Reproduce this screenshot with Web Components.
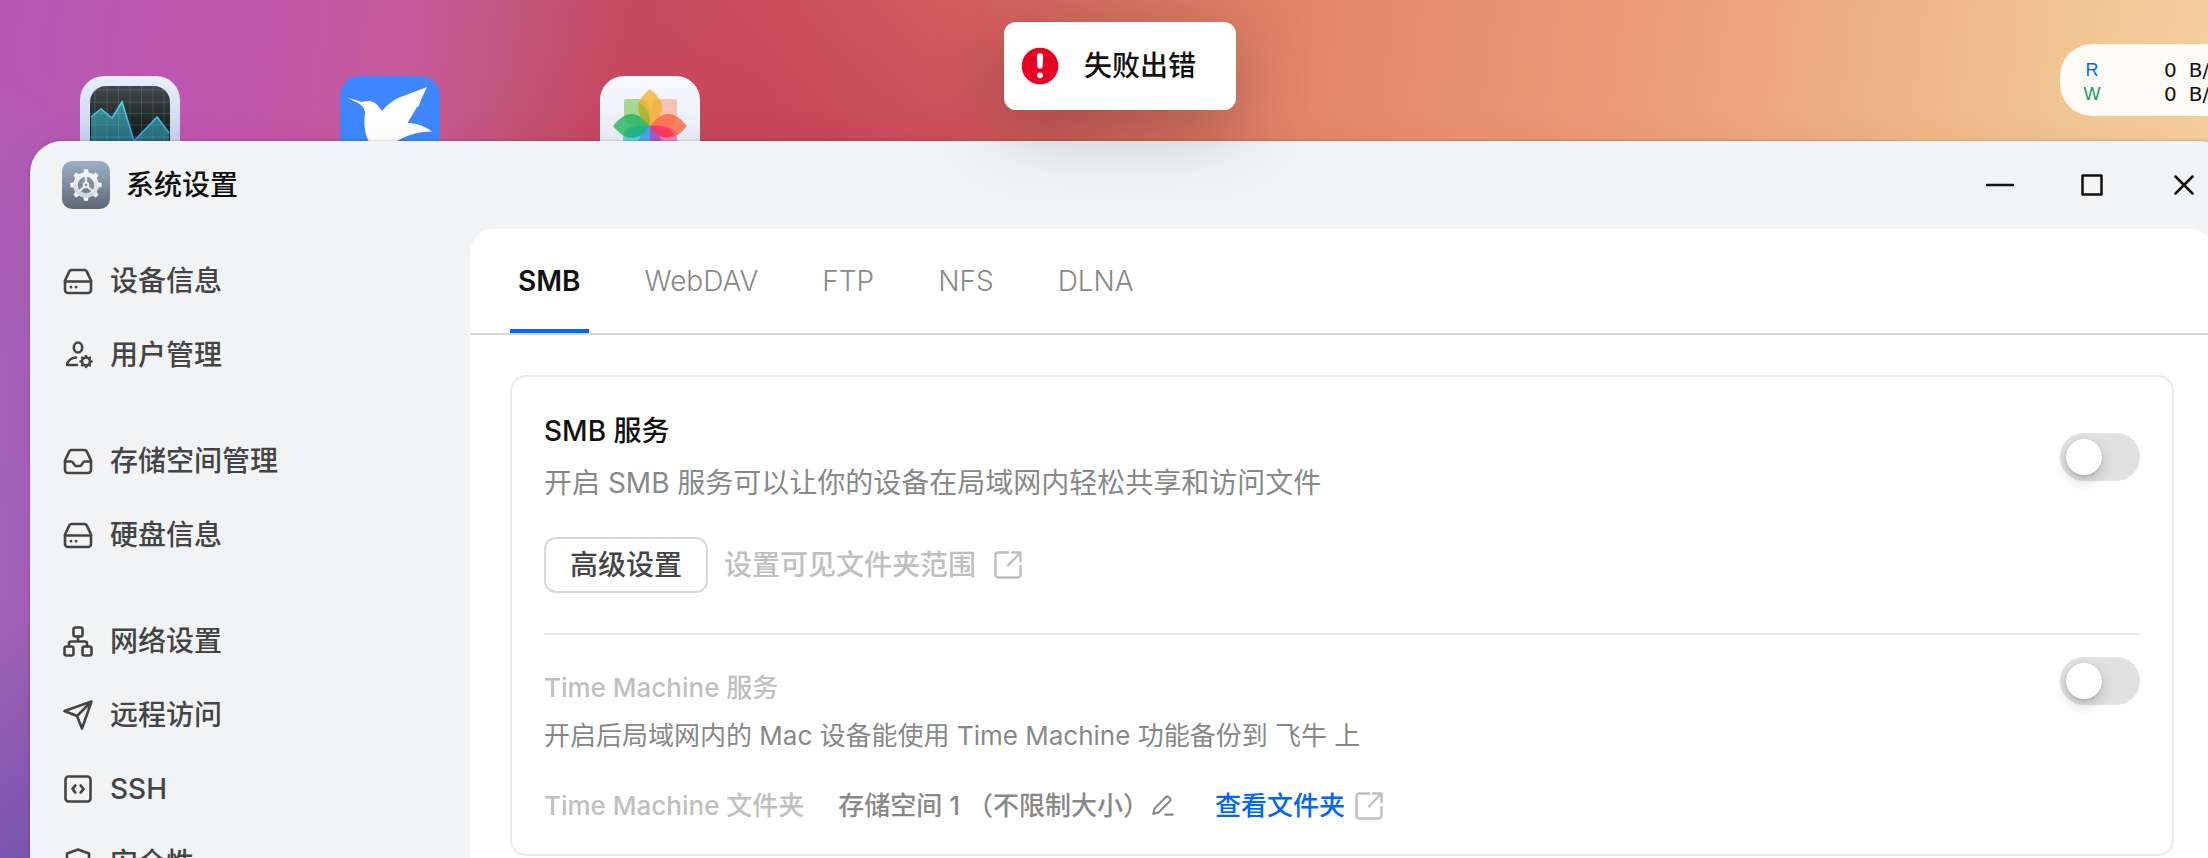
<!DOCTYPE html>
<html lang="zh-CN">
<head>
<meta charset="utf-8">
<meta name="viewport" content="width=device-width, initial-scale=1">
<title>系统设置</title>
<style>
    html, body {
        margin: 0;
        height: 100%;
        overflow: hidden;
    }

    body {
        --text-1: #111;
        --text-2: #444;
        --text-3: #888;
        --text-4: #bfbfbf;
        --line: #ebebeb;
        --primary: #0066ff;
        font-family: Inter, "Noto Sans CJK SC", sans-serif;
        font-size: 28px;
        line-height: 44px;
        color: var(--text-1);
    }
</style>
</head>
<body>
<nas-desktop>
    <app-icon slot="apps" name="monitor" label="资源监控"></app-icon>
    <app-icon slot="apps" name="bird" label="迅雷"></app-icon>
    <app-icon slot="apps" name="photos" label="相册"></app-icon>

    <disk-widget slot="widget"></disk-widget>

    <settings-window slot="window" heading="系统设置">
        <side-group slot="nav">
            <side-item icon="disk">设备信息</side-item>
            <side-item icon="user">用户管理</side-item>
        </side-group>
        <side-group slot="nav">
            <side-item icon="storage">存储空间管理</side-item>
            <side-item icon="disk">硬盘信息</side-item>
        </side-group>
        <side-group slot="nav">
            <side-item icon="network">网络设置</side-item>
            <side-item icon="send">远程访问</side-item>
            <side-item icon="code">SSH</side-item>
            <side-item icon="shield">安全性</side-item>
        </side-group>

        <tab-bar tabs="SMB,WebDAV,FTP,NFS,DLNA" active="SMB"></tab-bar>
        <settings-card>
            <service-row label="SMB 服务" desc="开启 SMB 服务可以让你的设备在局域网内轻松共享和访问文件">
                <smb-actions></smb-actions>
            </service-row>
            <service-row label="Time Machine 服务" desc="开启后局域网内的 Mac 设备能使用 Time Machine 功能备份到 飞牛 上" muted>
                <backup-folder></backup-folder>
            </service-row>
        </settings-card>
    </settings-window>

    <toast-message slot="toast">失败出错</toast-message>
</nas-desktop>

<script>
// Iconos de linea, todos en una caja de 32x32
const ICONS = {
    disk: `<path d="M9.5 5h13c1 0 1.7.5 2.2 1.4l4.3 9.1V25a3 3 0 0 1-3 3H6a3 3 0 0 1-3-3v-9.5l4.3-9.1C7.8 5.5 8.5 5 9.5 5z"/><path d="M3 16.5h26"/><path d="M9 22.2h.01M14 22.2h.01" stroke-width="2.8"/>`,
    user: `<ellipse cx="16" cy="8.5" rx="4.2" ry="5"/><path d="M14 18.5c-5 .4-8.5 3.5-9 7.500h10"/><circle cx="24" cy="22.5" r="4"/><path d="M24 17v1.5M24 26.5V28M18.5 22.5H20M28 22.5h1.5M20.1 18.600l1.1 1.1M26.800 25.300l1.1 1.1M20.1 26.400l1.1-1.1M26.800 19.700l1.1-1.1"/>`,
    storage: `<path d="M9.5 5h13c1 0 1.7.5 2.2 1.4l4.3 9.1V25a3 3 0 0 1-3 3H6a3 3 0 0 1-3-3v-9.5l4.3-9.1C7.8 5.5 8.5 5 9.5 5z"/><path d="M3 16.5h6.5c2 0 2.3 4.5 4.5 4.5h4c2.200 0 2.500-4.500 4.500-4.500H29"/>`,
    network: `<rect x="11.500" y="2.500" width="9" height="9" rx="2"/><rect x="2.500" y="21.500" width="9" height="9" rx="2"/><rect x="20.500" y="21.500" width="9" height="9" rx="2"/><path d="M16 11.500v5M7 21.500v-3a2 2 0 0 1 2-2h14a2 2 0 0 1 2 2v3"/>`,
    send: `<path d="M29.500 2.500L2.500 12l12.500 5 5 12.500zM29 3L15 17"/>`,
    code: `<rect x="3.500" y="3.500" width="25" height="25" rx="3"/><path d="M13.300 12.500L10.500 16l2.800 3.500M18.700 12.500l2.800 3.500-2.800 3.500" stroke-width="2.800"/>`,
    shield: `<path d="M16 2.500l11 4V16c0 7-5 11.500-11 14C10 27.500 5 23 5 16V6.500z"/><path d="M11 15.500l3.500 3.500 6.500-6.500"/>`,
    open: `<path d="M16 3.500H6A2.500 2.500 0 0 0 3.500 6v20A2.500 2.500 0 0 0 6 28.500h20a2.500 2.500 0 0 0 2.500-2.500V17M20 3.500h8.500V12M28 4L16 16.500" stroke-width="2.400"/>`,
    pen: `<path d="M3 26.500l1.500-7L19.500 4.500a3 3 0 0 1 4.500 0l1 1a3 3 0 0 1 0 4.300L10 24.800zM19 27.500h10" stroke-width="2.800"/>`,
    minimize: `<path d="M3 16h26" stroke-width="2.500"/>`,
    maximize: `<rect x="6.500" y="6.500" width="19" height="19" stroke-width="2.500"/>`,
    close: `<path d="M7.500 7.500l17 17M24.500 7.500l-17 17" stroke-width="2.500"/>`
};

function icon(name, size = 32) {
    return `<svg width="${size}" height="${size}" viewBox="0 0 32 32" fill="none" stroke="currentColor" stroke-width="2.6" stroke-linecap="round" stroke-linejoin="round" aria-hidden="true">${ICONS[name]}</svg>`;
}

// Engranaje: dientes repetidos alrededor del centro
function gear() {
    const teeth = [0, 45, 90, 135, 180, 225, 270, 315]
        .map(a => `<path d="M21.300 12.500L22 8.300h4l.7 4.200z" transform="rotate(${a} 24 24)"/>`).join('');
    return `
        <svg width="48" height="48" viewBox="0 0 48 48" aria-hidden="true">
            <defs>
                <linearGradient id="bg" x2="0" y2="1"><stop stop-color="#9cb0c8"/><stop offset="1" stop-color="#5e6877"/></linearGradient>
                <linearGradient id="fg" gradientUnits="userSpaceOnUse" x1="0" y1="8" x2="0" y2="40"><stop stop-color="#fff"/><stop offset="1" stop-color="#c9ccd2"/></linearGradient>
            </defs>
            <rect width="48" height="48" rx="10" fill="url(#bg)"/>
            <g fill="url(#fg)">${teeth}</g>
            <circle cx="24" cy="24" r="10.500" fill="none" stroke="url(#fg)" stroke-width="4.500"/>
            <g stroke="#eceef1" stroke-width="2.200"><path d="M24 15v7M22.500 25.500L17 30.500M25.500 25.500l5.500 5"/></g>
            <circle cx="24" cy="24" r="2.300" fill="none" stroke="#eceef1" stroke-width="2"/>
        </svg>`;
}

const APP_ART = {
    monitor: `
        <defs>
            <linearGradient id="frame" x2="0" y2="1"><stop stop-color="#e6f0fd"/><stop offset="1" stop-color="#b6bfe4"/></linearGradient>
            <linearGradient id="screen" x2="0" y2="1"><stop stop-color="#444a4b"/><stop offset=".5" stop-color="#1c2223"/></linearGradient>
            <linearGradient id="area" x2="0" y2="1"><stop stop-color="#3b9c9f"/><stop offset="1" stop-color="#23547a"/></linearGradient>
            <linearGradient id="curve" x2="0" y2="1"><stop stop-color="#4ee0e0"/><stop offset="1" stop-color="#3393e8"/></linearGradient>
        </defs>
        <rect width="100" height="100" rx="24" fill="url(#frame)"/>
        <rect x="10" y="10" width="80" height="80" rx="16" fill="url(#screen)"/>
        <path d="M11 41l10-8 11 9 10-16 12 39 23-24 12 16v23c0 6-4 10-10 10H21c-6 0-10-4-10-10z" fill="url(#area)" fill-opacity=".9"/>
        <path d="M15 12v75M27 10v80M38.500 10v80M50 10v80M61.500 10v80M73 10v80M84 12v76M10 14h80M10 26h80M10 37.500h80M10 49h80M10 61h80" stroke="#7fd8c0" stroke-opacity=".2" stroke-width="1"/>
        <path d="M11 41l10-8 11 9 10-16 12 39 23-24 12 16" fill="none" stroke="url(#curve)" stroke-width="1.600"/>`,
    bird: `
        <rect width="100" height="100" rx="20" fill="#3f86ff"/>
        <path d="M7 21.500L22 26c5-2 13-1 16 4l4 5c5-6 10-10 16-13L87 11l-7 15-1 4-2 1-9.500 16c9 0 17 3 24.500 8.500-12 0-24 3-35 9.500-6 12-13 15-13 15-11-7-18-15-19-27-1-6-.5-12 0-15 0-5-2-8-6-10.500z" fill="#fff"/>`,
    photos: `
        <defs><linearGradient id="paper" x2="0" y2="1"><stop stop-color="#f8f9fd"/><stop offset="1" stop-color="#e0e5f0"/></linearGradient></defs>
        <rect width="100" height="100" rx="24" fill="url(#paper)"/>
        <g fill-opacity=".78">
            <path d="M50 50H37c-9 0-13-5-13-12V25q0-2 2-2h12c8 0 12 5 12 14z" fill="#8fd077"/>
            <path d="M50 50V37c0-9 5-14 13-14h12q2 0 2 2v13c0 8-5 12-13 12z" fill="#f9b49c"/>
            <path d="M50 50h13c9 0 14 5 14 13v14H62c-8 0-12-5-12-13z" fill="#ef5fc0"/>
            <path d="M50 50v13c0 9-5 14-13 14H23V62c0-8 5-12 13-12z" fill="#3fc8d0"/>
            <path d="M50 50C34 37 34 26 50 13c16 13 16 24 0 37z" fill="#f5b02c"/>
            <path d="M50 50C37 34 26 34 13 50c13 16 24 16 37 0z" fill="#20b35c"/>
            <path d="M50 50c13-16 24-16 37 0-13 16-24 16-37 0z" fill="#fc6238"/>
            <path d="M50 50c-16 13-16 24 0 37z" fill="#4a94f5"/>
            <path d="M50 50c16 13 16 24 0 37z" fill="#9150c8"/>
        </g>
        <path d="M50 50c9-1 19 0 24 8-9 7-17 3-24-8z" fill="#f92f62" fill-opacity=".8"/>
        <path d="M50 50c-9-1-19 0-24 8 9 7 17 3 24-8z" fill="#17b09a" fill-opacity=".5"/>
        <path d="M50 50c-9-5-13-13-11-23 7 2 11 8 11 23z" fill="#8db52e" fill-opacity=".6"/>`
};

// Escritorio: fondo, iconos y capas por encima
class NasDesktop extends HTMLElement {
    constructor() {
        super();
        this.attachShadow({ mode: 'open' });
    }

    connectedCallback() {
        this.shadowRoot.innerHTML = `
            <style>
                :host {
                    display: block;
                    position: relative;
                    width: calc(100% + 32px);
                    height: 100%;
                    overflow: hidden;
                    background:
                        linear-gradient(to bottom, rgba(166, 98, 186, 0) 8%, rgba(166, 98, 186, 0.9) 40%, #a563b9 70%, #7c57b0 100%) 0 0 / 60px 100% no-repeat,
                        radial-gradient(ellipse 420px 150px at 860px 150px, rgba(192, 60, 84, 0.5), rgba(192, 60, 84, 0)),
                        linear-gradient(97deg, #b45ab4 0%, #c056ae 10%, #c65a98 18%, #c2567c 22%, #c6485e 27%, #cc4b5c 33%, #d4605f 42%, #de7964 50%, #e68d6c 60%, #eb9e76 71%, #efbb88 84%, #f3cb98 92%, #f8d7a2 100%);
                }

                .apps {
                    display: flex;
                    gap: 160px;
                    padding: 76px 80px;
                }

                ::slotted([slot="widget"]) { position: absolute; top: 44px; right: 0; }
                ::slotted([slot="window"]) { position: absolute; top: 141px; left: 30px; right: 8px; }
                ::slotted([slot="toast"]) { position: absolute; top: 22px; left: 50%; transform: translateX(-50%); }
            </style>
            <div class="apps"><slot name="apps"></slot></div>
            <slot name="widget"></slot>
            <slot name="window"></slot>
            <slot name="toast"></slot>
        `;
    }
}

class AppIcon extends HTMLElement {
    constructor() {
        super();
        this.attachShadow({ mode: 'open' });
    }

    connectedCallback() {
        this.shadowRoot.innerHTML = `
            <style>
                :host { display: block; }
                button { display: block; padding: 0; border: 0; background: none; cursor: pointer; }
                svg { display: block; }
            </style>
            <button type="button" aria-label="${this.getAttribute('label')}">
                <svg width="100" height="100" viewBox="0 0 100 100">${APP_ART[this.getAttribute('name')]}</svg>
            </button>
        `;
    }
}

// Velocidad de lectura y escritura
class DiskWidget extends HTMLElement {
    constructor() {
        super();
        this.attachShadow({ mode: 'open' });
    }

    connectedCallback() {
        this.shadowRoot.innerHTML = `
            <style>
                :host {
                    display: block;
                    box-sizing: border-box;
                    width: 180px;
                    height: 72px;
                    padding: 14px 0 0 22px;
                    border-radius: 32px 0 0 32px;
                    background: rgba(255, 255, 255, 0.92);
                    font: 20px/24px "DejaVu Sans", sans-serif;
                    white-space: nowrap;
                }
                .row { display: flex; gap: 12px; }
                .key { width: 20px; margin-right: 50px; font: 18px/24px "Liberation Sans", sans-serif; text-align: center; }
                .read { color: var(--primary); }
                .write { color: #0a9b57; }
            </style>
            <div class="row"><span class="key read">R</span><span>0</span><span>B/s</span></div>
            <div class="row"><span class="key write">W</span><span>0</span><span>B/s</span></div>
        `;
    }
}

class ToastMessage extends HTMLElement {
    constructor() {
        super();
        this.attachShadow({ mode: 'open' });
    }

    connectedCallback() {
        this.shadowRoot.innerHTML = `
            <style>
                :host {
                    display: flex;
                    align-items: center;
                    gap: 24px;
                    padding: 22px 40px 22px 16px;
                    border-radius: 12px;
                    background: #fff;
                    box-shadow: 0 16px 72px rgba(0, 0, 0, 0.25);
                    font-weight: 500;
                    white-space: nowrap;
                }
                svg { display: block; }
            </style>
            <svg width="40" height="40" viewBox="0 0 40 40" aria-hidden="true">
                <circle cx="20" cy="20" r="18.300" fill="#e60023"/>
                <path d="M16.800 10.500a3.200 3.200 0 0 1 6.400 0l-.6 9.500a2.600 2.600 0 0 1-5.200 0z" fill="#fff"/>
                <circle cx="20" cy="29.300" r="2.900" fill="#fff"/>
            </svg>
            <span role="alert"><slot></slot></span>
        `;
    }
}

class SettingsWindow extends HTMLElement {
    constructor() {
        super();
        this.attachShadow({ mode: 'open' });
    }

    connectedCallback() {
        this.shadowRoot.innerHTML = `
            <style>
                :host {
                    display: block;
                    border-radius: 32px;
                    background: #f1f3f5;
                    box-shadow: 0 0 3px rgba(0, 0, 0, 0.25), 0 8px 48px rgba(0, 0, 0, 0.06);
                }
                header {
                    display: flex;
                    align-items: center;
                    gap: 16px;
                    height: 88px;
                    padding: 0 26px 0 32px;
                }
                h1 { flex: 1; margin: 0; font-size: 28px; font-weight: 500; }
                .controls { display: flex; gap: 48px; }
                button {
                    display: grid;
                    place-items: center;
                    width: 44px;
                    height: 44px;
                    padding: 0;
                    border: 0;
                    background: none;
                    color: inherit;
                    cursor: pointer;
                }
                svg { display: block; }
                .body { display: grid; grid-template-columns: 440px 1fr; padding-right: 18px; }
                nav { display: flex; flex-direction: column; gap: 42px; padding: 20px 32px; }
                main { min-width: 0; padding-bottom: 40px; border-radius: 24px 24px 0 0; background: #fff; }
            </style>
            <header>
                ${gear()}
                <h1>${this.getAttribute('heading')}</h1>
                <div class="controls">
                    <button type="button" aria-label="最小化">${icon('minimize')}</button>
                    <button type="button" aria-label="最大化">${icon('maximize')}</button>
                    <button type="button" aria-label="关闭">${icon('close')}</button>
                </div>
            </header>
            <div class="body">
                <nav><slot name="nav"></slot></nav>
                <main><slot></slot></main>
            </div>
        `;
    }
}

class SideGroup extends HTMLElement {
    constructor() {
        super();
        this.attachShadow({ mode: 'open' });
    }

    connectedCallback() {
        this.shadowRoot.innerHTML = `
            <style>
                :host { display: flex; flex-direction: column; gap: 10px; }
            </style>
            <slot></slot>
        `;
    }
}

class SideItem extends HTMLElement {
    constructor() {
        super();
        this.attachShadow({ mode: 'open' });
    }

    connectedCallback() {
        this.shadowRoot.innerHTML = `
            <style>
                :host { display: block; }
                a {
                    display: flex;
                    align-items: center;
                    gap: 16px;
                    height: 64px;
                    color: var(--text-2);
                    font-weight: 500;
                    text-decoration: none;
                }
                svg { display: block; }
            </style>
            <a href="#">${icon(this.getAttribute('icon'))}<span><slot></slot></span></a>
        `;
    }
}

class TabBar extends HTMLElement {
    constructor() {
        super();
        this.attachShadow({ mode: 'open' });
    }

    connectedCallback() {
        const active = this.getAttribute('active');
        const tabs = this.getAttribute('tabs').split(',').map(t => `
            <button type="button" role="tab" aria-selected="${t === active}">${t}</button>
        `).join('');

        this.shadowRoot.innerHTML = `
            <style>
                :host { display: block; border-bottom: 2px solid #d8d8d8; }
                .tabs { display: flex; gap: 48px; padding: 0 40px; }
                button {
                    height: 104px;
                    padding: 4px 8px 0;
                    border: 0;
                    border-bottom: 4px solid transparent;
                    background: none;
                    font: inherit;
                    font-weight: 300;
                    color: var(--text-3);
                    cursor: pointer;
                }
                button[aria-selected="true"] {
                    border-bottom-color: var(--primary);
                    font-weight: 600;
                    color: var(--text-1);
                }
            </style>
            <div class="tabs" role="tablist">${tabs}</div>
        `;
    }
}

class SettingsCard extends HTMLElement {
    constructor() {
        super();
        this.attachShadow({ mode: 'open' });
    }

    connectedCallback() {
        this.shadowRoot.innerHTML = `
            <style>
                :host {
                    display: block;
                    margin: 40px 40px 0;
                    padding: 32px 32px 28px;
                    border: 2px solid var(--line);
                    border-radius: 16px;
                }
            </style>
            <slot></slot>
        `;
    }
}

// Fila con titulo, descripcion e interruptor
class ServiceRow extends HTMLElement {
    constructor() {
        super();
        this.attachShadow({ mode: 'open' });
    }

    connectedCallback() {
        this.shadowRoot.innerHTML = `
            <style>
                :host { display: block; }
                :host([muted]) {
                    margin-top: 40px;
                    padding-top: 22px;
                    border-top: 2px solid var(--line);
                    font-size: 26px;
                    line-height: 40px;
                }
                .head { display: flex; align-items: center; justify-content: space-between; gap: 32px; }
                .texts { display: flex; flex-direction: column; gap: 8px; }
                label { font-weight: 500; }
                p { margin: 0; color: var(--text-3); }
                :host([muted]) .head { align-items: flex-start; }
                :host([muted]) .texts { padding-top: 11px; }
                :host([muted]) label { color: var(--text-4); }
                input {
                    appearance: none;
                    display: block;
                    flex: none;
                    box-sizing: border-box;
                    width: 80px;
                    height: 48px;
                    margin: 0;
                    padding: 6px;
                    border-radius: 24px;
                    background: #e1e1e1;
                    cursor: pointer;
                }
                input::before {
                    content: "";
                    display: block;
                    width: 36px;
                    height: 36px;
                    border-radius: 50%;
                    background: #fff;
                    box-shadow: 0 6px 14px rgba(0, 0, 0, 0.18), 0 1px 3px rgba(0, 0, 0, 0.15);
                }
                input:checked { background: var(--primary); }
                input:checked::before { margin-left: auto; }
            </style>
            <div class="head">
                <div class="texts">
                    <label for="switch">${this.getAttribute('label')}</label>
                    <p>${this.getAttribute('desc')}</p>
                </div>
                <input type="checkbox" role="switch" id="switch">
            </div>
            <slot></slot>
        `;
    }
}

class SmbActions extends HTMLElement {
    constructor() {
        super();
        this.attachShadow({ mode: 'open' });
    }

    connectedCallback() {
        this.shadowRoot.innerHTML = `
            <style>
                :host { display: flex; align-items: center; gap: 16px; margin-top: 32px; }
                button {
                    height: 56px;
                    padding: 0 24px;
                    border: 2px solid #d8d8d8;
                    border-radius: 12px;
                    background: #fff;
                    font: inherit;
                    font-weight: 500;
                    color: var(--text-2);
                    cursor: pointer;
                }
                a { display: flex; align-items: center; gap: 16px; color: var(--text-4); font-weight: 500; text-decoration: none; }
                svg { display: block; }
            </style>
            <button type="button">高级设置</button>
            <a href="#">设置可见文件夹范围${icon('open')}</a>
        `;
    }
}

class BackupFolder extends HTMLElement {
    constructor() {
        super();
        this.attachShadow({ mode: 'open' });
    }

    connectedCallback() {
        this.shadowRoot.innerHTML = `
            <style>
                :host { display: flex; align-items: center; margin-top: 30px; font-weight: 500; }
                .name { margin-right: 34px; color: var(--text-4); }
                .value { margin-right: 2px; color: var(--text-3); }
                button { padding: 0; border: 0; margin-right: 40px; background: none; color: var(--text-3); cursor: pointer; }
                a { display: flex; align-items: center; gap: 8px; color: var(--primary); text-decoration: none; }
                a svg { color: var(--text-4); }
                svg { display: block; }
            </style>
            <span class="name">Time Machine 文件夹</span>
            <span class="value">存储空间 1 （不限制大小）</span>
            <button type="button" aria-label="编辑">${icon('pen', 24)}</button>
            <a href="#">查看文件夹${icon('open')}</a>
        `;
    }
}

customElements.define('nas-desktop', NasDesktop);
customElements.define('app-icon', AppIcon);
customElements.define('disk-widget', DiskWidget);
customElements.define('toast-message', ToastMessage);
customElements.define('settings-window', SettingsWindow);
customElements.define('side-group', SideGroup);
customElements.define('side-item', SideItem);
customElements.define('tab-bar', TabBar);
customElements.define('settings-card', SettingsCard);
customElements.define('service-row', ServiceRow);
customElements.define('smb-actions', SmbActions);
customElements.define('backup-folder', BackupFolder);
</script>
</body>
</html>
